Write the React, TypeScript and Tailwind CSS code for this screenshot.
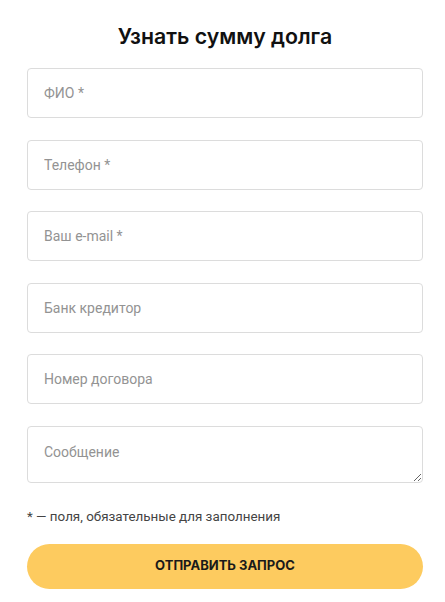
import React from "react";

const fields = ["ФИО *", "Телефон *", "Ваш e-mail *", "Банк кредитор", "Номер договора"];

export default function App() {
  return (
    <div className="min-h-screen bg-white" style={{ fontFamily: "Roboto, 'Liberation Sans', sans-serif" }}>
      <div className="ml-[27px] w-[396px] pt-[22px] pb-[12px]">
        <h1
          className="text-center text-[21.3px] leading-[28px] font-semibold text-[#111]"
          style={{ fontFamily: "Inter, 'Liberation Sans', sans-serif" }}
        >
          Узнать сумму долга
        </h1>
        <div className="mt-[18px] flex flex-col gap-[21.5px]">
          {fields.map((f) => (
            <input
              key={f}
              placeholder={f}
              className="h-[50px] w-full rounded-[4px] border border-[#dcdcdc] bg-white px-[16px] text-[14px] text-[#333] placeholder:text-[#939393] outline-none"
            />
          ))}
          <textarea
            placeholder="Сообщение"
            className="h-[57px] w-full rounded-[4px] border border-[#dcdcdc] bg-white px-[16px] pt-[16px] text-[14px] leading-[18px] text-[#333] placeholder:text-[#939393] outline-none"
          />
        </div>
        <p className="mt-[26px] text-[13.4px] leading-[16px] text-[#444]">* — поля, обязательные для заполнения</p>
        <button className="mt-[19px] h-[45px] w-full rounded-full bg-[#fdcb5f] text-[13px] font-bold uppercase text-[#1a1a1a]"
          style={{ fontFamily: "Inter, 'Liberation Sans', sans-serif" }}>
          Отправить запрос
        </button>
      </div>
    </div>
  );
}
